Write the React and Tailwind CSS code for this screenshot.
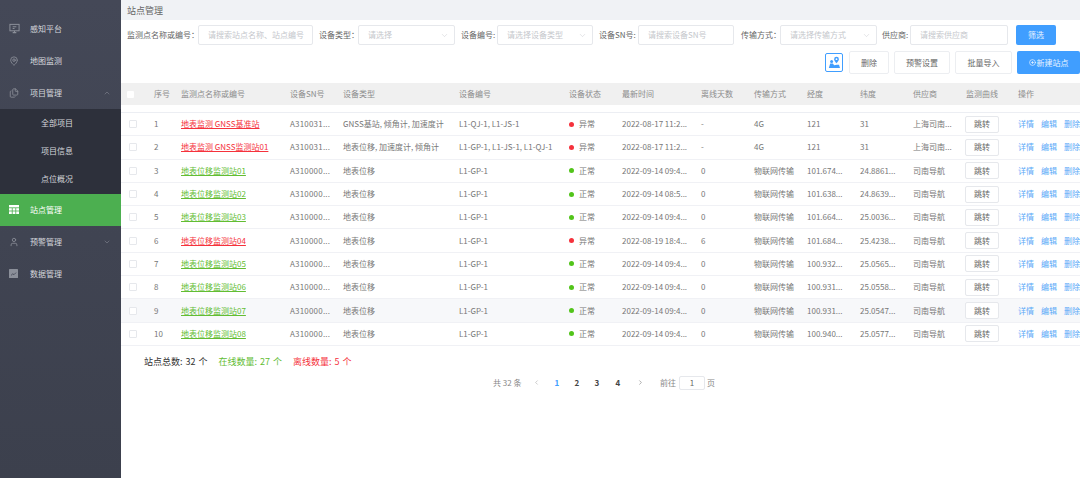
import React from "react";
import { MapPin, Files, User, ChevronUp, ChevronDown, ChevronLeft, ChevronRight, CirclePlus } from "lucide-react";

const G = "地表位移";
const rows = [
  [1, "地表监测 GNSS基准站", "red", "A310031...", "GNSS基站, 倾角计, 加速度计", "L1-QJ-1, L1-JS-1", "异常", "2022-08-17 11:2...", "-", "4G", "121", "31", "上海司南..."],
  [2, "地表监测 GNSS监测站01", "red", "A310031...", "地表位移, 加速度计, 倾角计", "L1-GP-1, L1-JS-1, L1-QJ-1", "异常", "2022-08-17 11:2...", "-", "4G", "121", "31", "上海司南..."],
  [3, "地表位移监测站01", "green", "A310000...", G, "L1-GP-1", "正常", "2022-09-14 09:4...", "0", "物联网传输", "101.674...", "24.8861...", "司南导航"],
  [4, "地表位移监测站02", "green", "A310000...", G, "L1-GP-1", "正常", "2022-09-14 08:5...", "0", "物联网传输", "101.638...", "24.8639...", "司南导航"],
  [5, "地表位移监测站03", "green", "A310000...", G, "L1-GP-1", "正常", "2022-09-14 09:4...", "0", "物联网传输", "101.664...", "25.0036...", "司南导航"],
  [6, "地表位移监测站04", "red", "A310000...", G, "L1-GP-1", "异常", "2022-08-19 18:4...", "6", "物联网传输", "101.684...", "25.4238...", "司南导航"],
  [7, "地表位移监测站05", "green", "A310000...", G, "L1-GP-1", "正常", "2022-09-14 09:4...", "0", "物联网传输", "100.932...", "25.0565...", "司南导航"],
  [8, "地表位移监测站06", "green", "A310000...", G, "L1-GP-1", "正常", "2022-09-14 09:4...", "0", "物联网传输", "100.931...", "25.0558...", "司南导航"],
  [9, "地表位移监测站07", "green", "A310000...", G, "L1-GP-1", "正常", "2022-09-14 09:4...", "0", "物联网传输", "100.931...", "25.0547...", "司南导航"],
  [10, "地表位移监测站08", "green", "A310000...", G, "L1-GP-1", "正常", "2022-09-14 09:4...", "0", "物联网传输", "100.940...", "25.0577...", "司南导航"],
];
const gridCols = "grid grid-cols-[33px_27px_109px_53px_116px_110px_53px_79px_53px_53px_53px_53px_53px_52px_70px] items-center";
const heads = ["序号", "监测点名称或编号", "设备SN号", "设备类型", "设备编号", "设备状态", "最新时间", "离线天数", "传输方式", "经度", "纬度", "供应商", "监测曲线", "操作"];

function MonitorIcon() {
  return (
    <svg width="11" height="11" viewBox="0 0 12 12" fill="none" stroke="#8b8f99" strokeWidth="1.1">
      <rect x="1" y="1.5" width="10" height="7" />
      <path d="M4 10.5h4M6 8.5v2M4 4h4M4 6h2" />
    </svg>
  );
}
function GridIcon() {
  return (
    <svg width="10" height="9" viewBox="0 0 10 9" fill="#fff">
      <rect x="0" y="0" width="10" height="2.4" />
      <rect x="0" y="3.2" width="2.8" height="2.4" /><rect x="3.6" y="3.2" width="2.8" height="2.4" /><rect x="7.2" y="3.2" width="2.8" height="2.4" />
      <rect x="0" y="6.4" width="2.8" height="2.6" /><rect x="3.6" y="6.4" width="2.8" height="2.6" /><rect x="7.2" y="6.4" width="2.8" height="2.6" />
    </svg>
  );
}
function ChartIcon() {
  return (
    <svg width="9" height="9" viewBox="0 0 9 9">
      <rect width="9" height="9" rx="0.6" fill="#8b8f99" />
      <path d="M2 6.4l1.8-1.6 1.2 .9L7 3.6" stroke="#3f4352" strokeWidth="0.8" fill="none" />
    </svg>
  );
}
function MapIcon() {
  return (
    <svg width="13" height="13" viewBox="0 0 13 13" fill="#409eff">
      <path d="M8.5 0.8a2.4 2.4 0 0 0-2.4 2.4c0 1.6 2.4 4 2.4 4s2.4-2.4 2.4-4A2.4 2.4 0 0 0 8.5 .8zm0 3.3a.9 .9 0 1 1 0-1.8 .9 .9 0 0 1 0 1.8z" />
      <circle cx="3.6" cy="5.4" r="1.5" />
      <path d="M0.8 12l1.4-4.4h2.6l1.4 1.6 2.6-.4h2.2l1 3.2z" />
    </svg>
  );
}

function NavItem({ icon, label, chevron, active }) {
  return (
    <div className={`flex h-8 items-center pl-[9px] pr-[10px] ${active ? "bg-[#4caf50] text-white" : "text-[#d5d7dc]"}`}>
      <span className="flex w-[21px] shrink-0 items-center">{icon}</span>
      <span className="flex-1">{label}</span>
      {chevron}
    </div>
  );
}

function Field({ label, placeholder, width, select, labelWidth }) {
  return (
    <div className="flex items-center">
      <span className={`whitespace-nowrap text-[#666] ${labelWidth}`}>{label}</span>
      <div className={`flex h-[20px] items-center justify-between rounded-[2px] border border-[#e6e8ec] bg-white pl-[9px] pr-[5px] text-[#c5c7cc] ${width}`}>
        <span className="whitespace-nowrap">{placeholder}</span>
        {select && <ChevronDown size={9} color="#c5c7cc" strokeWidth={1.2} />}
      </div>
    </div>
  );
}

function GhostBtn({ children, width }) {
  return (
    <button className={`flex h-[23px] items-center justify-center rounded-[2px] border border-[#eceef1] bg-white text-[#666] ${width}`}>
      {children}
    </button>
  );
}

export default function App() {
  return (
    <div className="flex h-[478px] w-[1080px] overflow-hidden bg-white text-[8px] leading-none text-[#777] font-['Noto_Sans_CJK_SC','Liberation_Sans',sans-serif]">
      <aside className="flex w-[121px] shrink-0 flex-col bg-gradient-to-b from-[#444857] to-[#3c404d] pt-[12.5px] text-[8px]">
        <NavItem icon={<MonitorIcon />} label="感知平台" />
        <NavItem icon={<MapPin size={10} color="#8b8f99" />} label="地图监测" />
        <NavItem icon={<Files size={10} color="#8b8f99" />} label="项目管理" chevron={<ChevronUp size={8} color="#7d818c" />} />
        <div className="flex h-[85px] flex-col bg-[#2d303b] text-[#d5d7dc]">
          <div className="flex h-[28.3px] items-center pl-[41px]">全部项目</div>
          <div className="flex h-[28.3px] items-center pl-[41px]">项目信息</div>
          <div className="flex h-[28.3px] items-center pl-[41px]">点位概况</div>
        </div>
        <NavItem active icon={<GridIcon />} label="站点管理" />
        <NavItem icon={<User size={10} color="#8b8f99" />} label="预警管理" chevron={<ChevronDown size={8} color="#7d818c" />} />
        <NavItem icon={<ChartIcon />} label="数据管理" />
      </aside>

      <main className="min-w-0 flex-1">
        <div className="flex h-5 items-center bg-[#f0f2f5] pl-[6px] text-[9px] text-[#666]">站点管理</div>

        <div className="flex h-[20px] mt-[5px] items-center pl-[6px]">
          <Field label="监测点名称或编号：" labelWidth="w-[71px]" placeholder="请搜索站点名称、站点编号" width="w-[115px]" />
          <div className="ml-[6px]"><Field label="设备类型：" labelWidth="w-[39px]" placeholder="请选择" width="w-[97px]" select /></div>
          <div className="ml-[6px]"><Field label="设备编号:" labelWidth="w-[36px]" placeholder="请选择设备类型" width="w-[96px]" select /></div>
          <div className="ml-[6px]"><Field label="设备SN号:" labelWidth="w-[39px]" placeholder="请搜索设备SN号" width="w-[96px]" /></div>
          <div className="ml-[7px]"><Field label="传输方式：" labelWidth="w-[39px]" placeholder="请选择传输方式" width="w-[97px]" select /></div>
          <div className="ml-[5px]"><Field label="供应商:" labelWidth="w-[28px]" placeholder="请搜索供应商" width="w-[98px]" /></div>
          <button className="ml-[8px] flex h-[20px] w-[40px] items-center justify-center rounded-[2px] bg-[#409eff] text-[#e8f3ff]">筛选</button>
        </div>

        <div className="mt-[6px] flex h-[23px] items-center justify-end gap-[5px] overflow-hidden">
          <button className="mr-[1px] flex h-[19px] w-[18px] items-center justify-center rounded-[2px] border border-[#409eff] bg-white"><MapIcon /></button>
          <GhostBtn width="w-[40px]">删除</GhostBtn>
          <GhostBtn width="w-[56px]">预警设置</GhostBtn>
          <GhostBtn width="w-[57px]">批量导入</GhostBtn>
          <button className="flex h-[23px] w-[63px] shrink-0 items-center justify-center gap-[1px] rounded-[2px] bg-[#409eff] text-[#e8f3ff]">
            <CirclePlus size={7} color="#fff" />新建站点
          </button>
        </div>

        <div className={`${gridCols} mt-[9px] h-[22px] bg-[#f0f0f0] text-[#8c8c8c]`}>
          <span className="ml-[6px] h-[7px] w-[7px] rounded-[1px] bg-white" />
          {heads.map((h) => <span key={h} className="whitespace-nowrap">{h}</span>)}
        </div>

        <div className="mt-[7px] border-t border-[#eceef3]">
          {rows.map((r) => {
            const bad = r[6] === "异常";
            return (
              <div key={r[0]} className={`${gridCols} h-[23.3px] border-b border-[#f0f1f5] ${r[0] === 9 ? "bg-[#f7f8fa]" : "bg-white"}`}>
                <span className="ml-[8px] h-[8px] w-[8px] rounded-[1px] border border-[#e6e8ec] bg-white" />
                <span>{r[0]}</span>
                <span className={`whitespace-nowrap underline ${r[2] === "red" ? "text-[#f5323c]" : "text-[#62bd33]"}`}>{r[1]}</span>
                <span className="whitespace-nowrap tracking-[0.2px]">{r[3]}</span>
                <span className="whitespace-nowrap">{r[4]}</span>
                <span className="whitespace-nowrap">{r[5]}</span>
                <span className="flex items-center gap-[5px] whitespace-nowrap">
                  <span className={`h-[5px] w-[5px] rounded-full ${bad ? "bg-[#f5323c]" : "bg-[#52c41a]"}`} />
                  {r[6]}
                </span>
                <span className="whitespace-nowrap">{r[7]}</span>
                <span>{r[8]}</span>
                <span className="whitespace-nowrap">{r[9]}</span>
                <span className="whitespace-nowrap">{r[10]}</span>
                <span className="whitespace-nowrap">{r[11]}</span>
                <span className="whitespace-nowrap">{r[12]}</span>
                <button className="-ml-[1px] flex h-[17px] w-[34px] items-center justify-center rounded-[2px] border border-[#e6e8ec] bg-white text-[#666]">跳转</button>
                <span className="flex gap-[7px] whitespace-nowrap text-[#5aa9f8]">
                  <span>详情</span><span>编辑</span><span>删除</span>
                </span>
              </div>
            );
          })}
        </div>

        <div className="mt-[11px] flex gap-[11px] pl-[23px] text-[9px] leading-[9px] [word-spacing:1px]">
          <span className="text-[#333]">站点总数: 32 个</span>
          <span className="text-[#62bd33]">在线数量: 27 个</span>
          <span className="text-[#f5323c]">离线数量: 5 个</span>
        </div>

        <div className="mt-[10px] flex h-[14px] items-center pl-[372px] text-[#888]">
          <span className="w-[40px] whitespace-nowrap">共 32 条</span>
          <ChevronLeft size={7} color="#aaa" />
          <span className="ml-[14.5px] w-[20px] font-bold text-[#409eff]">1</span>
          <span className="w-[20px] font-bold text-[#444]">2</span>
          <span className="w-[21px] font-bold text-[#444]">3</span>
          <span className="w-[21px] font-bold text-[#444]">4</span>
          <ChevronRight size={7} color="#777" />
          <span className="ml-[16.5px] whitespace-nowrap">前往</span>
          <span className="ml-[3px] flex h-[14px] w-[26px] items-center justify-center rounded-[2px] border border-[#e6e8ec] text-[#666]">1</span>
          <span className="ml-[2px]">页</span>
        </div>
      </main>
    </div>
  );
}
